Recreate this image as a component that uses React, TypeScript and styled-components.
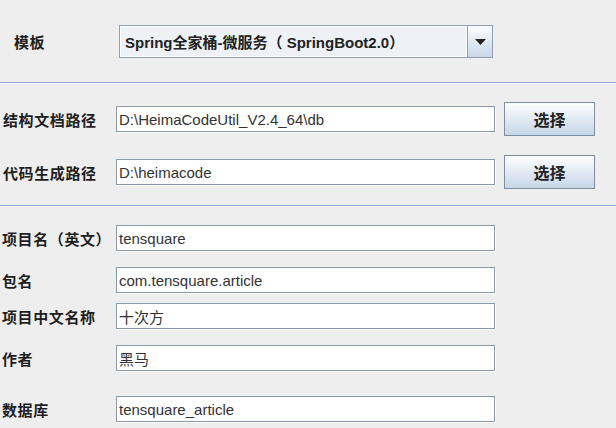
import React from 'react';
import styled, { createGlobalStyle } from 'styled-components';

const GlobalStyle = createGlobalStyle`
  html, body {
    margin: 0;
    padding: 0;
    background: #eeeeee;
  }
  body {
    font-family: 'Liberation Sans', 'Noto Sans CJK SC', sans-serif;
  }
`;

const cjk = `'Noto Sans CJK SC', 'Liberation Sans', sans-serif`;
const latin = `'Liberation Sans', 'Noto Sans CJK SC', sans-serif`;

interface FieldRow {
  label: string;
  value: string;
  top: number;
}

const projectRows: FieldRow[] = [
  { label: '项目名（英文）', value: 'tensquare', top: 0 },
  { label: '包名', value: 'com.tensquare.article', top: 16 },
  { label: '项目中文名称', value: '十次方', top: 10 },
  { label: '作者', value: '黑马', top: 16 },
  { label: '数据库', value: 'tensquare_article', top: 25 },
];

const pathRows: FieldRow[] = [
  { label: '结构文档路径', value: 'D:\\HeimaCodeUtil_V2.4_64\\db', top: 0 },
  { label: '代码生成路径', value: 'D:\\heimacode', top: 19 },
];

const ArrowIcon = () => (
  <svg width="11" height="6" viewBox="0 0 11 6">
    <path d="M0 0 H11 L5.5 6 Z" fill="#222" />
  </svg>
);

const App: React.FC = () => (
  <Page>
    <GlobalStyle />
    <Section $top={25} $bottom={24}>
      <Row $labelWidth={119} $top={0} $height={33}>
        <Label $indent={14}>模板</Label>
        <Combo>
          <ComboText>Spring全家桶-微服务（ SpringBoot2.0）</ComboText>
          <ArrowButton>
            <ArrowIcon />
          </ArrowButton>
        </Combo>
      </Row>
    </Section>
    <Rule />
    <Section $top={18} $bottom={16}>
      {pathRows.map((row) => (
        <Row key={row.label} $labelWidth={116} $top={row.top} $height={34}>
          <Label $indent={3}>{row.label}</Label>
          <Field readOnly defaultValue={row.value} />
          <Button type="button">选择</Button>
        </Row>
      ))}
    </Section>
    <Rule />
    <Section $top={18} $bottom={6}>
      {projectRows.map((row) => (
        <Row key={row.label} $labelWidth={116} $top={row.top} $height={26}>
          <Label $indent={2}>{row.label}</Label>
          <Field readOnly defaultValue={row.value} />
        </Row>
      ))}
    </Section>
  </Page>
);

export default App;

const Page = styled.div`
  width: 616px;
  height: 428px;
  overflow: hidden;
  background: #eeeeee;
`;

const Section = styled.div<{ $top: number; $bottom: number }>`
  display: flex;
  flex-direction: column;
  padding-top: ${(p) => p.$top}px;
  padding-bottom: ${(p) => p.$bottom}px;
`;

const Rule = styled.div`
  height: 1px;
  background: #8fa7cc;
  border-bottom: 1px solid #ffffff;
`;

const Row = styled.div<{ $labelWidth: number; $top: number; $height: number }>`
  display: grid;
  grid-template-columns: ${(p) => p.$labelWidth}px auto auto;
  justify-content: start;
  align-items: center;
  height: ${(p) => p.$height}px;
  margin-top: ${(p) => p.$top}px;
`;

const Label = styled.div<{ $indent: number }>`
  padding-left: ${(p) => p.$indent}px;
  font-family: ${cjk};
  font-size: 15px;
  font-weight: bold;
  letter-spacing: 0.6px;
  color: #1e1e1e;
  white-space: nowrap;
`;

const Combo = styled.div`
  display: flex;
  width: 374px;
  height: 33px;
  box-sizing: border-box;
  border: 1px solid #8ea0b6;
  background: #eef1f6;
`;

const ComboText = styled.div`
  flex: 1;
  display: flex;
  align-items: center;
  padding-left: 4px;
  border: 1px solid #ffffff;
  font-family: ${latin};
  font-size: 15px;
  font-weight: bold;
  color: #222222;
  white-space: pre;
`;

const ArrowButton = styled.div`
  width: 24px;
  display: flex;
  align-items: center;
  justify-content: center;
  border-left: 1px solid #8ea0b6;
  background: linear-gradient(#fbfcfe, #c8d7e9);
`;

const Field = styled.input`
  width: 379px;
  height: 26px;
  box-sizing: border-box;
  margin: 0;
  padding: 0 0 0 2px;
  border: 1px solid #8b9aab;
  box-shadow: 1px 1px 0 #ffffff;
  background: #ffffff;
  font-family: ${latin};
  font-size: 15px;
  color: #333333;
  outline: none;
`;

const Button = styled.button`
  width: 91px;
  height: 34px;
  margin-left: 9px;
  padding: 0;
  border: 1px solid #7d8da2;
  border-radius: 0;
  background: linear-gradient(#fdfdfe, #c6d6e8);
  font-family: ${cjk};
  font-size: 16px;
  font-weight: bold;
  color: #222222;
`;
